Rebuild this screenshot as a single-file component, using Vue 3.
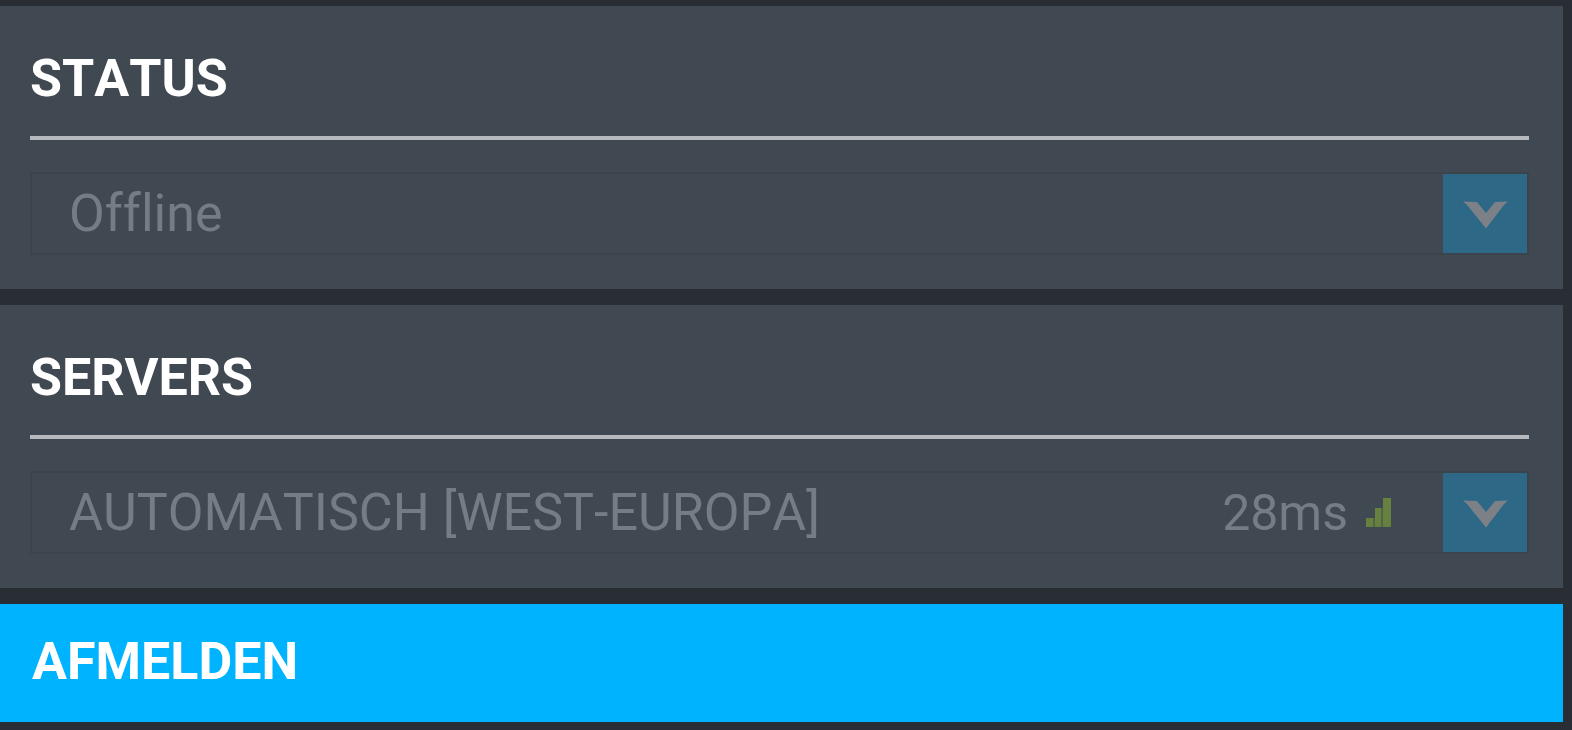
<script setup>
import { ref } from 'vue'

const status = ref('Offline')
const server = ref('AUTOMATISCH [WEST-EUROPA]')
const ping = ref(28)
</script>

<template>
  <main class="menu">
    <section class="panel">
      <h2 class="title"><label for="status">STATUS</label></h2>
      <div class="field">
        <select id="status" v-model="status" class="select" disabled>
          <option>Offline</option>
        </select>
        <span class="arrow" aria-hidden="true">
          <svg class="chevron" viewBox="0 0 46 30">
            <path d="M1 2.500 L15 3 L24 14 L33 3 L46 2.500 L42 6 L24 29.500 L5 6 Z" />
          </svg>
        </span>
      </div>
    </section>

    <section class="panel">
      <h2 class="title"><label for="server">SERVERS</label></h2>
      <div class="field">
        <select id="server" v-model="server" class="select" disabled>
          <option>AUTOMATISCH [WEST-EUROPA]</option>
        </select>
        <span class="ping">
          {{ ping }}ms
          <svg class="signal" viewBox="0 0 25 30" aria-hidden="true">
            <path d="M0 20h7v9H0z M9 10h6v19H9z M17 0h8v29h-8z" />
            <path class="haze" d="M7 20h2v9H7z M15 10h2v19h-2z" />
          </svg>
        </span>
        <span class="arrow" aria-hidden="true">
          <svg class="chevron" viewBox="0 0 46 30">
            <path d="M1 2.500 L15 3 L24 14 L33 3 L46 2.500 L42 6 L24 29.500 L5 6 Z" />
          </svg>
        </span>
      </div>
    </section>

    <button type="button" class="signout">AFMELDEN</button>
  </main>
</template>

<style>
body {
  margin: 0;
  background: #292d34;
}
</style>

<style scoped>
.menu {
  display: flex;
  flex-direction: column;
  gap: 16px;
  padding: 6px 9px 8px 0;
  font-family: Roboto, "Liberation Sans", sans-serif;
  font-size: 52px;
  font-kerning: none;
  font-variant-ligatures: none;
  line-height: 60px;
}

.panel {
  padding: 43px 34px 34px 30px;
  background: #404851;
}

.title {
  margin: 0 0 32px;
  padding-bottom: 27px;
  border-bottom: 4px solid #b6babf;
  color: #fff;
  font-size: 52px;
  font-weight: 700;
}

.field {
  display: grid;
  grid-template-columns: 1fr auto 84px;
  align-items: center;
  box-sizing: border-box;
  height: 83px;
  border: 2px solid #3b434b;
  color: #757c85;
}

.select {
  grid-area: 1 / 1 / 2 / 4;
  width: 100%;
  height: 79px;
  margin: 0;
  padding: 0 84px 0 37px;
  border: 0;
  appearance: none;
  background: transparent;
  color: #757c85;
  font: inherit;
  font-kerning: none;
  font-variant-ligatures: none;
  opacity: 1;
}

.ping {
  grid-area: 1 / 2;
  display: flex;
  align-items: center;
  gap: 18px;
  margin-right: 52px;
  font-size: 50px;
  pointer-events: none;
}

.signal {
  width: 25px;
  height: 30px;
  fill: #66803f;
}

.haze {
  opacity: 0.5;
}

.arrow {
  grid-area: 1 / 3;
  display: flex;
  align-items: center;
  justify-content: center;
  height: 79px;
  background: #2d6887;
  pointer-events: none;
}

.chevron {
  width: 46px;
  height: 30px;
  fill: #7c8087;
}

.signout {
  padding: 28px 32px 30px;
  border: 0;
  background: #00b3ff;
  color: #fff;
  font: inherit;
  font-kerning: none;
  font-variant-ligatures: none;
  font-weight: 700;
  text-align: left;
  cursor: pointer;
}
</style>
